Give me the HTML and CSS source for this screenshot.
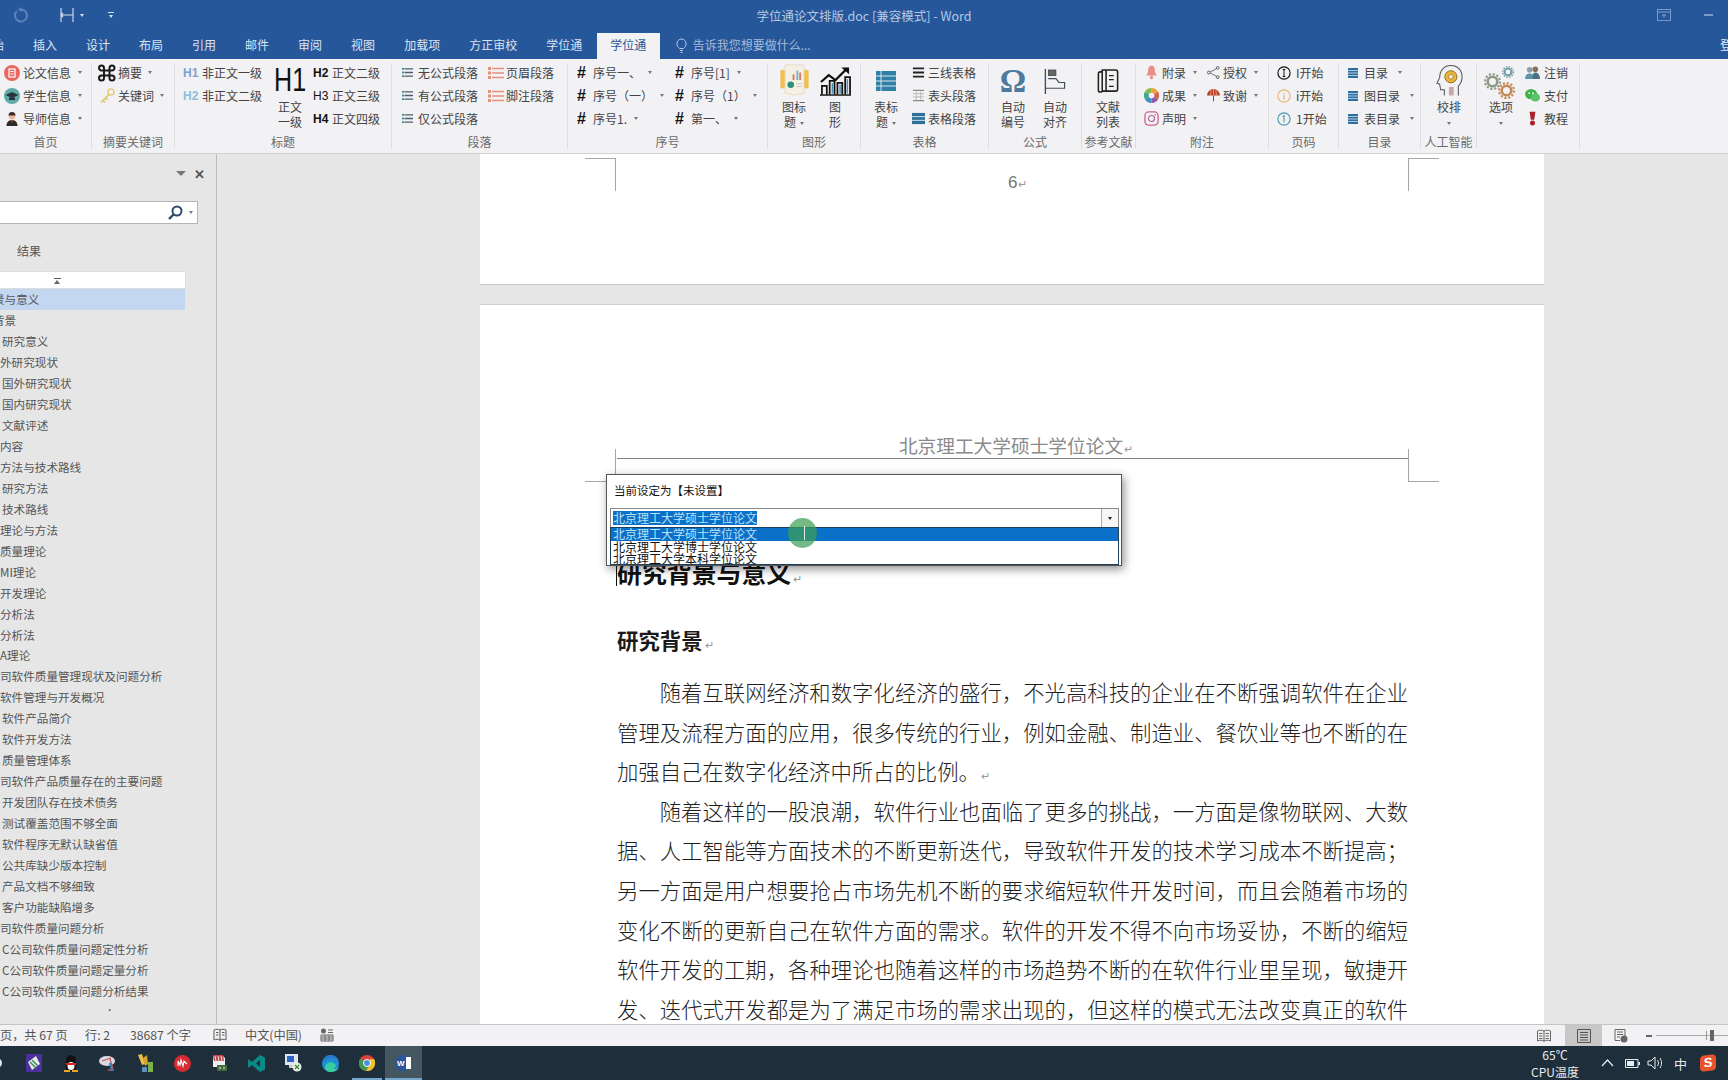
FILE: index.html
```html
<!DOCTYPE html>
<html lang="zh-CN">
<head>
<meta charset="utf-8">
<title>学位通论文排版.doc [兼容模式] - Word</title>
<link rel="stylesheet" href="styles.css">
</head>
<body>
<svg class="defs" aria-hidden="true">
  <symbol id="i-thesis" viewBox="0 0 16 16"><circle cx="8" cy="8" r="8" fill="#e9675f"/><rect x="5" y="4" width="6" height="8" fill="none" stroke="#fff" stroke-width="1.2"/><path d="M6.5 6.5h3M6.5 9h3" stroke="#fff"/></symbol>
  <symbol id="i-student" viewBox="0 0 16 16"><circle cx="8" cy="8" r="8" fill="#5fa9a6"/><path d="M1.5 7L8 4l6.5 3L8 10z" fill="#27323a"/><path d="M5 9.5v2.5h6V9.500z" fill="#27323a"/></symbol>
  <symbol id="i-teacher" viewBox="0 0 16 16"><circle cx="8" cy="5" r="3.400" fill="#e9b59b"/><path d="M4.500 4.500a3.500 3.500 0 0 1 7 0z" fill="#3a2a28"/><path d="M2.500 15c0-4 2.500-6 5.500-6s5.500 2 5.500 6z" fill="#2e2a2c"/><path d="M7 9h2l-1 3z" fill="#d6423c"/></symbol>
  <symbol id="i-knot" viewBox="0 0 18 18"><path d="M6 6V4a2.500 2.500 0 1 0-2.500 2.500H14A2.500 2.500 0 1 0 11.500 4v10a2.500 2.500 0 1 0 2.500-2.500H3.500A2.500 2.500 0 1 0 6 14z" fill="none" stroke="#1a1a1a" stroke-width="2"/></symbol>
  <symbol id="i-key" viewBox="0 0 18 18"><circle cx="13" cy="5" r="3" fill="none" stroke="#e6cf7c" stroke-width="1.600"/><path d="M11 7.500L3 15.500M5 13.500l2 2M7.500 11l2 2" stroke="#e0c66b" stroke-width="1.600"/></symbol>
  <symbol id="i-lines" viewBox="0 0 12 12"><rect x="0" y="1" width="2.500" height="2" fill="#3c8d96"/><rect x="0" y="5" width="2.500" height="2" fill="#3c8d96"/><rect x="0" y="9" width="2.500" height="2" fill="#3c8d96"/><path d="M3 2h9M3 6h9M3 10h9" stroke="#4a5d6a" stroke-width="1.500"/></symbol>
  <symbol id="i-redlines" viewBox="0 0 16 12"><rect x="0" y="0" width="3" height="3" fill="#e58f7e"/><rect x="0" y="4.500" width="3" height="3" fill="#e58f7e"/><rect x="0" y="9" width="3" height="3" fill="#e58f7e"/><path d="M4 1.500h12M4 6h12M4 10.500h12" stroke="#e58f7e" stroke-width="1.500"/></symbol>
  <symbol id="i-report" viewBox="0 0 32 34"><rect x="1" y="6" width="5" height="20" rx="2" fill="#f1c04c"/><rect x="26" y="6" width="5" height="20" rx="2" fill="#f1c04c"/><path d="M6 1h20v30l-10 2-10-2z" fill="#f4f1e4" stroke="#e3dcc0"/><rect x="14" y="11" width="2" height="6" fill="#d9796f"/><rect x="18" y="7" width="2" height="10" fill="#7fb0c6"/><rect x="21" y="9" width="2" height="8" fill="#d9796f"/><circle cx="12" cy="22" r="3.500" fill="#2f8f7a"/><path d="M18 21h6M18 24h6" stroke="#c8c8c8"/></symbol>
  <symbol id="i-chart" viewBox="0 0 32 32"><path d="M1 18l8-7 7 5L28 4" fill="none" stroke="#111" stroke-width="2.200"/><path d="M22 3h8v7z" fill="#111"/><path d="M2 31V22h5v9M10 31V17h5v14M18 31V19h5v12M26 31V13h5v18" fill="none" stroke="#111" stroke-width="1.800"/><path d="M12 30V19h1.500v11zM20 30V21h1.500v9zM27.500 30V15H29v15z" fill="#4d8fb5"/><path d="M0 31.500h32" stroke="#111" stroke-width="1.500"/></symbol>
  <symbol id="i-table" viewBox="0 0 20 20"><rect width="20" height="20" fill="#2f7fa6"/><path d="M0 5h20M0 10h20M0 15h20M5 0v20" stroke="#dfe9ef" stroke-width="1"/></symbol>
  <symbol id="i-three" viewBox="0 0 14 12"><path d="M1 1.500h12M1 6h12M1 10.500h12" stroke="#222" stroke-width="2"/></symbol>
  <symbol id="i-thead" viewBox="0 0 14 14"><path d="M1 1.500h12M1 12.500h12" stroke="#8a8a8a" stroke-width="1.400"/><path d="M1 5h12M1 8.500h12M4.500 3v9M9.500 3v9" stroke="#b5b5b5"/></symbol>
  <symbol id="i-tlines" viewBox="0 0 14 12"><rect width="14" height="12" fill="#2e7099"/><path d="M0 4h14M0 8h14" stroke="#dfe9ef"/></symbol>
  <symbol id="i-align" viewBox="0 0 22 26"><path d="M1 0v26" stroke="#3e4e5c" stroke-width="1.400"/><rect x="4" y="1" width="8" height="6" fill="#666" stroke="#333" stroke-width=".6"/><path d="M4 10h8l3 4h6v6H1" fill="none" stroke="#3e4e5c" stroke-width="1.200"/></symbol>
  <symbol id="i-book" viewBox="0 0 22 26"><path d="M5 1h14a2 2 0 0 1 2 2v18a2 2 0 0 1-2 2H5z" fill="none" stroke="#222" stroke-width="1.600"/><path d="M5 3H3a2 2 0 0 0-2 2v17a2 2 0 0 0 2 2h2M9 1v22" fill="none" stroke="#222" stroke-width="1.600"/><path d="M12 7h5M12 11h5M12 18h5" stroke="#222" stroke-width="1.300"/></symbol>
  <symbol id="i-bell" viewBox="0 0 16 18"><path d="M8 1c3 0 4 2.500 4 5 0 3 1 5 2.500 6.500h-13C3 11 4 9 4 6c0-2.500 1-5 4-5z" fill="#e98f86"/><circle cx="8" cy="15" r="2" fill="#e98f86"/></symbol>
  <symbol id="i-share" viewBox="0 0 14 14"><circle cx="2" cy="7" r="1.500" fill="none" stroke="#555"/><circle cx="11.500" cy="2" r="1.500" fill="none" stroke="#555"/><circle cx="11.500" cy="12" r="1.500" fill="none" stroke="#555"/><path d="M3.500 6.500l6.500-3.500M3.500 7.500l6.500 3.500" stroke="#555" stroke-width=".9"/></symbol>
  <symbol id="i-wheel" viewBox="0 0 16 16"><path d="M8 0a8 8 0 0 1 7 4L8 8z" fill="#e8a33c"/><path d="M15 4a8 8 0 0 1 0 8L8 8z" fill="#d9614f"/><path d="M15 12a8 8 0 0 1-7 4V8z" fill="#8f5aa8"/><path d="M8 16a8 8 0 0 1-7-4l7-4z" fill="#3f8fc4"/><path d="M1 12a8 8 0 0 1 0-8l7 4z" fill="#3fa78a"/><path d="M1 4a8 8 0 0 1 7-4v8z" fill="#87b84a"/><circle cx="8" cy="8" r="3" fill="#f2f1f4"/></symbol>
  <symbol id="i-umbrella" viewBox="0 0 16 16"><path d="M0 8a8 8 0 0 1 16 0z" fill="#b8402c"/><path d="M5 1.500L4.500 8M11 1.500L11.500 8M8 0v8" stroke="#f0b189"/><path d="M8 8v7" stroke="#7b4a2c" stroke-width="1.300"/></symbol>
  <symbol id="i-insta" viewBox="0 0 16 16"><rect x="1" y="1" width="14" height="14" rx="4" fill="none" stroke="#c9668f" stroke-width="1.400"/><circle cx="8" cy="8" r="3.200" fill="none" stroke="#b05f9c" stroke-width="1.200"/><circle cx="12" cy="4" r=".9" fill="#c97a5c"/></symbol>
  <symbol id="i-c1" viewBox="0 0 16 16"><circle cx="8" cy="8" r="7" fill="none" stroke="#111" stroke-width="1.300"/><path d="M8 4v8M6.500 4h3M6.500 12h3" stroke="#111" stroke-width="1.100"/></symbol>
  <symbol id="i-c2" viewBox="0 0 16 16"><circle cx="8" cy="8" r="7" fill="none" stroke="#e6b878" stroke-width="1.300"/><path d="M8 4.500v1.500M8 7v5" stroke="#e0a862" stroke-width="1.200"/></symbol>
  <symbol id="i-c3" viewBox="0 0 16 16"><circle cx="8" cy="8" r="7" fill="none" stroke="#4a98ad" stroke-width="1.300"/><path d="M6.500 5.500L8 4v8" fill="none" stroke="#4a98ad" stroke-width="1.200"/></symbol>
  <symbol id="i-toc" viewBox="0 0 10 10"><rect width="10" height="10" fill="#2e6fa1"/><path d="M0 2.500h10M0 5h10M0 7.500h10" stroke="#e6eef4" stroke-width=".7"/></symbol>
  <symbol id="i-head" viewBox="0 0 30 34"><path d="M10 33v-6H6l-1-6-3-1 3-6C5 6 10 1 17 1c7 0 12 5 12 12 0 5-2 8-4 10v10" fill="none" stroke="#555" stroke-width="1.100"/><circle cx="17" cy="13" r="6.500" fill="#e8b53a" stroke="#8c6a1e"/><circle cx="17" cy="13" r="2.500" fill="#f4f1e4" stroke="#8c6a1e" stroke-width=".7"/><rect x="15" y="24" width="5" height="9" fill="#c9a7a7"/></symbol>
  <symbol id="i-gear" viewBox="0 0 16 16"><circle cx="8" cy="8" r="4.500" fill="none" stroke="currentColor" stroke-width="2.400"/><circle cx="8" cy="8" r="7" fill="none" stroke="currentColor" stroke-width="2" stroke-dasharray="2 1.660"/></symbol>
  <symbol id="i-users" viewBox="0 0 16 16"><circle cx="5" cy="5" r="3" fill="#8f9faa"/><circle cx="11" cy="4.500" r="3" fill="#8a6e5a"/><path d="M0 15c0-4 2-6 5-6s5 2 5 6z" fill="#5a95ac"/><path d="M8 13c0-3 1-5 3-5s5 2 5 7H8z" fill="#49737f"/></symbol>
  <symbol id="i-wechat" viewBox="0 0 16 16"><ellipse cx="6.500" cy="6.500" rx="6.500" ry="5.500" fill="#3fb24c"/><ellipse cx="11" cy="10" rx="5" ry="4.500" fill="#5cc168"/><circle cx="4.500" cy="5.500" r=".9" fill="#fff"/><circle cx="8.500" cy="5.500" r=".9" fill="#fff"/></symbol>
  <symbol id="i-alert" viewBox="0 0 10 18"><path d="M1.500 1h7L7 10.500H3z" fill="#a8222a"/><circle cx="5" cy="14.500" r="3" fill="#a8222a"/></symbol>
  <symbol id="i-spellbook" viewBox="0 0 14 14"><path d="M7 2C5 1 3 1 1 2v10c2-1 4-1 6 0 2-1 4-1 6 0V2c-2-1-4-1-6 0zM7 2v11M3 4.500h2.500M3 7h2.500M9 4.500h2.500M9 7h2.500" fill="none" stroke="#5a5a5a"/></symbol>
</svg>

<div class="app">
  <header class="titlebar">
    <div class="qat">
      <svg class="q-undo" width="16" height="16" viewBox="0 0 16 16"><path d="M4 4a6 6 0 1 0 4-1.500" fill="none" stroke="#5c84b8" stroke-width="2"/><path d="M8.500 0v5L5 2.500z" fill="#5c84b8"/></svg>
      <svg class="q-custom" width="16" height="14" viewBox="0 0 16 14"><path d="M2 0v14M14 0v14M2 7h12M2 7l2-2M2 7l2 2" fill="none" stroke="#d5e0ee" stroke-width="1.100"/></svg>
      <i class="caret light q-caret"></i>
      <span class="q-more"><b></b><i class="caret light"></i></span>
    </div>
    <div class="doc-title">学位通论文排版.doc [兼容模式] - Word</div>
    <div class="wincontrols">
      <svg width="14" height="12" viewBox="0 0 14 12"><rect x=".5" y=".5" width="13" height="11" fill="none" stroke="#7a9ac6"/><path d="M.5 3h13M7 5v4M5 7l2-2 2 2" fill="none" stroke="#7a9ac6"/></svg>
      <b class="minimize"></b>
    </div>
  </header>
  <nav class="tabs">
    <span class="tab first">开始</span><span class="tab">插入</span><span class="tab">设计</span><span class="tab">布局</span><span class="tab">引用</span><span class="tab">邮件</span><span class="tab">审阅</span><span class="tab">视图</span><span class="tab">加载项</span><span class="tab">方正审校</span><span class="tab">学位通</span><span class="tab active">学位通</span>
    <span class="tell"><svg width="11" height="15" viewBox="0 0 11 15"><path d="M3.500 10.500C2 9 1 8 1 5.500a4.500 4.500 0 0 1 9 0C10 8 9 9 7.500 10.500zM4 12.500h3M4.500 14.500h2" fill="none" stroke="#b8cbe4"/></svg>告诉我您想要做什么...</span>
    <span class="login">登录</span>
  </nav>

  <section class="ribbon">
    <div class="group g1"><div class="gbody">
      <div class="col">
        <div class="it"><svg class="ic w16"><use href="#i-thesis"/></svg><span>论文信息</span><i class="caret"></i></div>
        <div class="it"><svg class="ic w16"><use href="#i-student"/></svg><span>学生信息</span><i class="caret"></i></div>
        <div class="it"><svg class="ic w16"><use href="#i-teacher"/></svg><span>导师信息</span><i class="caret"></i></div>
      </div></div><div class="glabel">首页</div></div>

    <div class="group g2"><div class="gbody">
      <div class="col">
        <div class="it"><svg class="ic w18"><use href="#i-knot"/></svg><span>摘要</span><i class="caret"></i></div>
        <div class="it"><svg class="ic w18"><use href="#i-key"/></svg><span>关键词</span><i class="caret"></i></div>
      </div></div><div class="glabel">摘要关键词</div></div>

    <div class="group g3"><div class="gbody">
      <div class="col cA3">
        <div class="it"><b class="hmark soft">H1</b><span>非正文一级</span></div>
        <div class="it"><b class="hmark soft2">H2</b><span>非正文二级</span></div>
      </div>
      <div class="big h1big"><span class="h1text">H1</span><span>正文</span><span>一级</span></div>
      <div class="col cC3">
        <div class="it"><b class="hmark">H2</b><span>正文二级</span></div>
        <div class="it"><b class="hmark thin">H3</b><span>正文三级</span></div>
        <div class="it"><b class="hmark">H4</b><span>正文四级</span></div>
      </div></div><div class="glabel">标题</div></div>

    <div class="group g4"><div class="gbody">
      <div class="col cA4">
        <div class="it"><svg class="ic w11"><use href="#i-lines"/></svg><span>无公式段落</span></div>
        <div class="it"><svg class="ic w11"><use href="#i-lines"/></svg><span>有公式段落</span></div>
        <div class="it"><svg class="ic w11"><use href="#i-lines"/></svg><span>仅公式段落</span></div>
      </div>
      <div class="col">
        <div class="it tight"><svg class="ic w16"><use href="#i-redlines"/></svg><span>页眉段落</span></div>
        <div class="it tight"><svg class="ic w16"><use href="#i-redlines"/></svg><span>脚注段落</span></div>
      </div></div><div class="glabel">段落</div></div>

    <div class="group g5"><div class="gbody">
      <div class="col cA5">
        <div class="it"><b class="hash">#</b><span>序号一、</span><i class="caret"></i></div>
        <div class="it"><b class="hash">#</b><span>序号（一）</span><i class="caret"></i></div>
        <div class="it"><b class="hash">#</b><span>序号1.</span><i class="caret"></i></div>
      </div>
      <div class="col">
        <div class="it"><b class="hash">#</b><span>序号[1]</span><i class="caret"></i></div>
        <div class="it"><b class="hash">#</b><span>序号（1）</span><i class="caret"></i></div>
        <div class="it"><b class="hash">#</b><span>第一、</span><i class="caret"></i></div>
      </div></div><div class="glabel">序号</div></div>

    <div class="group g6"><div class="gbody">
      <div class="big"><svg class="bigic w30"><use href="#i-report"/></svg><span>图标</span><span>题<i class="caret"></i></span></div>
      <div class="big"><svg class="bigic w30"><use href="#i-chart"/></svg><span>图</span><span>形</span></div>
    </div><div class="glabel">图形</div></div>

    <div class="group g7"><div class="gbody">
      <div class="big"><svg class="bigic w20"><use href="#i-table"/></svg><span>表标</span><span>题<i class="caret"></i></span></div>
      <div class="col">
        <div class="it"><svg class="ic w13"><use href="#i-three"/></svg><span>三线表格</span></div>
        <div class="it"><svg class="ic w13"><use href="#i-thead"/></svg><span>表头段落</span></div>
        <div class="it"><svg class="ic w13"><use href="#i-tlines"/></svg><span>表格段落</span></div>
      </div></div><div class="glabel">表格</div></div>

    <div class="group g8"><div class="gbody">
      <div class="big"><span class="omega">Ω</span><span>自动</span><span>编号</span></div>
      <div class="big"><svg class="bigic w22"><use href="#i-align"/></svg><span>自动</span><span>对齐</span></div>
    </div><div class="glabel">公式</div></div>

    <div class="group g9"><div class="gbody">
      <div class="big"><svg class="bigic w22"><use href="#i-book"/></svg><span>文献</span><span>列表</span></div>
    </div><div class="glabel">参考文献</div></div>

    <div class="group g10"><div class="gbody">
      <div class="col cA10">
        <div class="it"><svg class="ic w15"><use href="#i-bell"/></svg><span>附录</span><i class="caret"></i></div>
        <div class="it"><svg class="ic w15"><use href="#i-wheel"/></svg><span>成果</span><i class="caret"></i></div>
        <div class="it"><svg class="ic w15"><use href="#i-insta"/></svg><span>声明</span><i class="caret"></i></div>
      </div>
      <div class="col">
        <div class="it"><svg class="ic w13"><use href="#i-share"/></svg><span>授权</span><i class="caret"></i></div>
        <div class="it"><svg class="ic w13"><use href="#i-umbrella"/></svg><span>致谢</span><i class="caret"></i></div>
      </div></div><div class="glabel">附注</div></div>

    <div class="group g11"><div class="gbody">
      <div class="col">
        <div class="it wide"><svg class="ic w14"><use href="#i-c1"/></svg><span>I开始</span></div>
        <div class="it wide"><svg class="ic w14"><use href="#i-c2"/></svg><span>i开始</span></div>
        <div class="it wide"><svg class="ic w14"><use href="#i-c3"/></svg><span>1开始</span></div>
      </div></div><div class="glabel">页码</div></div>

    <div class="group g12"><div class="gbody">
      <div class="col">
        <div class="it wide"><svg class="ic w10"><use href="#i-toc"/></svg><span>目录</span><i class="caret"></i></div>
        <div class="it wide"><svg class="ic w10"><use href="#i-toc"/></svg><span>图目录</span><i class="caret"></i></div>
        <div class="it wide"><svg class="ic w10"><use href="#i-toc"/></svg><span>表目录</span><i class="caret"></i></div>
      </div></div><div class="glabel">目录</div></div>

    <div class="group g13"><div class="gbody">
      <div class="big"><svg class="bigic w28"><use href="#i-head"/></svg><span>校排</span><span><i class="caret solo"></i></span></div>
    </div><div class="glabel">人工智能</div></div>

    <div class="group g14"><div class="gbody">
      <div class="big"><span class="gears"><svg class="gear a"><use href="#i-gear"/></svg><svg class="gear b"><use href="#i-gear"/></svg><svg class="gear c"><use href="#i-gear"/></svg></span><span>选项</span><span><i class="caret solo"></i></span></div>
      <div class="col">
        <div class="it"><svg class="ic w15"><use href="#i-users"/></svg><span>注销</span></div>
        <div class="it"><svg class="ic w15"><use href="#i-wechat"/></svg><span>支付</span></div>
        <div class="it"><svg class="ic w15 alert"><use href="#i-alert"/></svg><span>教程</span></div>
      </div></div></div>
  </section>

  <main class="main">
    <aside class="nav">
      <div class="nav-top"><i class="nav-arrow"></i><span class="nav-x">✕</span></div>
      <div class="search">
        <svg width="15" height="15" viewBox="0 0 15 15"><circle cx="9" cy="6" r="4.500" fill="none" stroke="#2b4a6b" stroke-width="2"/><path d="M5.500 9.500L1 14" stroke="#2b4a6b" stroke-width="2.400"/></svg>
        <i class="caret"></i>
      </div>
      <div class="nav-tab">结果</div>
      <div class="nav-scroll"><i class="up"></i></div>
      <ul class="outline">
        <li class="cur"><span class="cut">景与意义</span></li>
        <li><span class="cut">背景</span></li>
        <li class="l3">研究意义</li>
        <li>外研究现状</li>
        <li class="l3">国外研究现状</li>
        <li class="l3">国内研究现状</li>
        <li class="l3">文献评述</li>
        <li>内容</li>
        <li>方法与技术路线</li>
        <li class="l3">研究方法</li>
        <li class="l3">技术路线</li>
        <li>理论与方法</li>
        <li>质量理论</li>
        <li>MI理论</li>
        <li>开发理论</li>
        <li>分析法</li>
        <li>分析法</li>
        <li>A理论</li>
        <li>司软件质量管理现状及问题分析</li>
        <li>软件管理与开发概况</li>
        <li class="l3">软件产品简介</li>
        <li class="l3">软件开发方法</li>
        <li class="l3">质量管理体系</li>
        <li>司软件产品质量存在的主要问题</li>
        <li class="l3">开发团队存在技术债务</li>
        <li class="l3">测试覆盖范围不够全面</li>
        <li class="l3">软件程序无默认缺省值</li>
        <li class="l3">公共库缺少版本控制</li>
        <li class="l3">产品文档不够细致</li>
        <li class="l3">客户功能缺陷增多</li>
        <li>司软件质量问题分析</li>
        <li class="l3">C公司软件质量问题定性分析</li>
        <li class="l3">C公司软件质量问题定量分析</li>
        <li class="l3">C公司软件质量问题分析结果</li>
      </ul>
      <div class="nav-dot">.</div>
    </aside>

    <div class="docarea">
      <div class="page page1">
        <i class="crop tl"></i><i class="crop tr"></i>
        <div class="pagenum">6<span class="pm">↵</span></div>
      </div>
      <div class="page page2">
        <i class="crop hl"></i><i class="crop hr"></i>
        <div class="pghead">北京理工大学硕士学位论文<span class="pm">↵</span></div>
        <h1 class="h1"><i class="cursor"></i>研究背景与意义<span class="pm">↵</span></h1>
        <h2 class="h2">研究背景<span class="pm">↵</span></h2>
        <p class="para">随着互联网经济和数字化经济的盛行，不光高科技的企业在不断强调软件在企业管理及流程方面的应用，很多传统的行业，例如金融、制造业、餐饮业等也不断的在加强自己在数字化经济中所占的比例。<span class="pm">↵</span></p>
        <p class="para">随着这样的一股浪潮，软件行业也面临了更多的挑战，一方面是像物联网、大数据、人工智能等方面技术的不断更新迭代，导致软件开发的技术学习成本不断提高；另一方面是用户想要抢占市场先机不断的要求缩短软件开发时间，而且会随着市场的变化不断的更新自己在软件方面的需求。软件的开发不得不向市场妥协，不断的缩短软件开发的工期，各种理论也随着这样的市场趋势不断的在软件行业里呈现，敏捷开发、迭代式开发都是为了满足市场的需求出现的，但这样的模式无法改变真正的软件质量问题，还需要进一步的研究和探索。</p>
      </div>
    </div>
  </main>

  <footer class="status">
    <span class="s1">页，共 67 页</span><span class="s2">行: 2</span><span class="s3">38687 个字</span>
    <svg class="s4" width="14" height="14"><use href="#i-spellbook"/></svg>
    <span class="s5">中文(中国)</span>
    <svg class="s6" width="14" height="14" viewBox="0 0 14 14"><circle cx="3.500" cy="3" r="2.500" fill="#666"/><path d="M1 7h12v6H1zM1 9h12M1 11h12M5 7v6M9 7v6M8 2h5M8 4.500h5" fill="none" stroke="#666"/></svg>
    <span class="views">
      <svg width="14" height="14" viewBox="0 0 14 14"><path d="M7 2C5 1 2 1 .5 2v10c2-1 4.500-1 6.500 0 2-1 4.500-1 6.500 0V2C12 1 9 1 7 2zM7 2v11M2 4.500h3.500M2 7h3.500M2 9.500h3.500M8.500 4.500H12M8.500 7H12M8.500 9.500H12" fill="none" stroke="#666"/></svg>
      <span class="view-on"><svg width="14" height="14" viewBox="0 0 14 14"><path d="M.5.500h13v13H.5zM3 3.500h8M3 6h8M3 8.500h8M3 11h8" fill="none" stroke="#555"/></svg></span>
      <svg width="14" height="14" viewBox="0 0 14 14"><path d="M1 .500h10v7M1 .500v11h5M3 3h6M3 5.500h6M3 8h3" fill="none" stroke="#666"/><circle cx="10" cy="10" r="3.500" fill="#666"/></svg>
    </span>
    <span class="zoom"><b class="z-minus"></b><span class="z-track"><b class="z-tick"></b><b class="z-thumb"></b></span></span>
  </footer>

  <footer class="taskbar">
    <span class="tk first"><b class="tk-white"></b></span>
    <span class="tk"><svg width="16" height="18" viewBox="0 0 16 18"><rect width="16" height="18" fill="#4b2f9c"/><path d="M2 8l8-6 4 8-8 6z" fill="#e9e9e9"/><path d="M4 8l6 6M6 6l6 6" stroke="#3c8d58" stroke-width="1.500"/></svg></span>
    <span class="tk"><svg width="16" height="18" viewBox="0 0 16 18"><ellipse cx="8" cy="7" rx="5" ry="6" fill="#111"/><ellipse cx="8" cy="12" rx="5.500" ry="5" fill="#111"/><ellipse cx="8" cy="12" rx="3.500" ry="4" fill="#fff"/><path d="M3 9h10v2H3z" fill="#d6281f"/><path d="M1 17h6M9 17h6" stroke="#e8a423" stroke-width="2"/></svg></span>
    <span class="tk"><svg width="18" height="18" viewBox="0 0 18 18"><ellipse cx="8" cy="7" rx="8" ry="5" fill="#d9d9e0"/><path d="M3 7l9-3M11 5l3 10M9 16h6" fill="none" stroke="#c2555f" stroke-width="1.300"/><path d="M11 9l2 8" stroke="#3c7fb5" stroke-width="2"/></svg></span>
    <span class="tk"><svg width="17" height="18" viewBox="0 0 17 18"><path d="M1 1l4-1 3 10-3 1z" fill="#e9c146"/><path d="M6 4l4-3 1 9-3 2z" fill="#d9a530"/><rect x="5" y="13" width="5" height="5" fill="#5a8fc2"/><rect x="11" y="13" width="5" height="5" fill="#7cb04a"/><rect x="11" y="8" width="5" height="5" fill="#7cb04a"/></svg></span>
    <span class="tk"><svg width="17" height="17" viewBox="0 0 17 17"><circle cx="8.500" cy="8.500" r="8.500" fill="#d42c32"/><path d="M4 11V6l2 4 1-5 2 6 1-5 3 3" fill="none" stroke="#fff" stroke-width="1.100"/></svg></span>
    <span class="tk"><svg width="16" height="18" viewBox="0 0 16 18"><path d="M2 2h10l2 2v9H2z" fill="#eee"/><path d="M2 1l10 0 1 6H3z" fill="#b9484e"/><path d="M4 2l1 5M7 2l1 5M10 2l1 5" stroke="#eedddd"/><rect x="6" y="11" width="10" height="6" fill="#456a3c"/><path d="M8 14h2M12 14h2" stroke="#fff"/></svg></span>
    <span class="tk"><svg width="17" height="17" viewBox="0 0 17 17"><path d="M12 0l5 2.500v12L12 17 4 10l-3 2.500L0 12V5l1-.500L4 7zM12 5L8 8.500l4 3.500z" fill="#0c8a86"/></svg></span>
    <span class="tk"><svg width="17" height="18" viewBox="0 0 17 18"><rect x="0" y="0" width="13" height="11" fill="#dfe5ef"/><rect x="2" y="2" width="7" height="6" fill="#2a62c0"/><rect x="4" y="11" width="4" height="3" fill="#ccc"/><circle cx="12" cy="13" r="4.500" fill="#e9f1e4"/><path d="M10 11l4 4M14 11l-4 4" stroke="#3b8b3e" stroke-width="1.300"/></svg></span>
    <span class="tk"><svg width="17" height="17" viewBox="0 0 17 17"><circle cx="8.500" cy="8.500" r="8.500" fill="#1e8fd4"/><path d="M3 12c1-5 7-6 10-3 2 2 0 4-2 4 2 2 4 1 6-1-1 3-4 5-8 5-4 0-6-2-6-5z" fill="#38cda0"/><path d="M0 8.500C1 3 6 0 8.500 0c4 0 7 2.500 8 6-1-2-4-3-6-3-4 0-7 2-10.500 5.500z" fill="#2a79c8"/></svg></span>
    <span class="tk tk-run"><svg width="16" height="16" viewBox="0 0 16 16"><circle cx="8" cy="8" r="8" fill="#d9453a"/><path d="M1 4a8 8 0 0 0 6 12l4-7z" fill="#3d9a4c"/><path d="M15 4a8 8 0 0 1-8 12l4-7V4z" fill="#eec12e"/><circle cx="8" cy="8" r="3.500" fill="#4b8fd8" stroke="#fff"/></svg></span>
    <span class="tk tk-active"><span class="word-ic"><span class="word-w">W</span><b class="word-lines"></b></span></span>
    <span class="tray">
      <span class="temp"><span>65℃</span><span>CPU温度</span></span>
      <svg width="13" height="8" viewBox="0 0 13 8"><path d="M1 7l5.500-6L12 7" fill="none" stroke="#e8ecef" stroke-width="1.200"/></svg>
      <svg width="15" height="9" viewBox="0 0 15 9"><path d="M.5.500h12.500v8H.5z" fill="none" stroke="#e8ecef"/><rect x="2" y="2" width="7" height="5" fill="#e8ecef"/><rect x="13.500" y="3" width="1.500" height="3" fill="#e8ecef"/></svg>
      <svg width="16" height="14" viewBox="0 0 16 14"><path d="M1 5h3l4-4v12l-4-4H1zM10.500 4c1.300 2 1.300 4 0 6M13 2c2 3 2 7 0 10" fill="none" stroke="#e8ecef"/></svg>
      <span class="ime">中</span>
      <span class="sogou">S</span>
    </span>
  </footer>

  <div class="dialog">
    <div class="dlg-label">当前设定为【未设置】</div>
    <div class="combo"><span class="combo-sel">北京理工大学硕士学位论文</span><span class="combo-btn"><i class="caret dark"></i></span></div>
    <ul class="dlg-list">
      <li class="sel">北京理工大学硕士学位论文</li>
      <li>北京理工大学博士学位论文</li>
      <li>北京理工大学本科学位论文</li>
    </ul>
  </div>
  <div class="pointer"><i></i></div>
</div>
</body>
</html>
```

FILE: styles.css
```css
* { box-sizing: border-box; }
html, body { margin: 0; padding: 0; }
body { width: 1728px; height: 1080px; overflow: hidden; font-family: "Noto Sans CJK SC", "Liberation Sans", sans-serif; font-size: 12px; color: #444; }
ul { list-style: none; margin: 0; padding: 0; }
.defs { position: absolute; width: 0; height: 0; }
.app { position: relative; width: 1728px; height: 1080px; display: flex; flex-direction: column; overflow: hidden; background: #e6e6e6; }

.caret { display: inline-block; width: 0; height: 0; border: 2.5px solid transparent; border-top: 3px solid #777; border-bottom: 0; margin-left: 4px; vertical-align: middle; flex: none; }
.caret.light { border-top-color: #d5e0ee; }
.caret.dark { border-top-color: #222; margin: 0; }
.caret.solo { margin: 0; }

.titlebar { height: 33px; flex: none; background: #27579b; display: flex; align-items: center; padding-bottom: 3px; position: relative; }
.qat { display: flex; align-items: center; padding-left: 13px; }
.q-custom { margin-left: 30px; }
.q-caret { margin-left: 5px; }
.q-more { margin-left: 24px; display: inline-flex; flex-direction: column; align-items: center; gap: 2px; }
.q-more b { width: 6px; height: 1px; background: #d5e0ee; }
.q-more .caret { margin: 0; }
.doc-title { position: absolute; left: 0; right: 0; top: 7px; text-align: center; color: #b4c8e2; font-size: 12.5px; line-height: 17px; }
.wincontrols { margin-left: auto; display: flex; align-items: center; gap: 33px; padding-right: 15px; }
.minimize { width: 9px; height: 2px; background: #7a9ac6; }

.tabs { height: 26px; flex: none; background: #27579b; display: flex; align-items: stretch; color: #dbe4f1; font-size: 12px; line-height: 24px; position: relative; white-space: nowrap; }
.tab { padding: 0 14.5px; }
.tab.first { margin-left: -34.5px; }
.tab.active { background: #f2f1f4; color: #2b579a; padding: 0 13.5px; height: 26px; }
.tell { display: flex; align-items: center; gap: 6px; margin-left: 16px; color: #a5bcd9; font-size: 12px; height: 24px; }
.login { position: absolute; left: 1720px; top: 0; color: #e7edf5; }

.ribbon { height: 95px; flex: none; background: #f2f1f4; border-bottom: 1px solid #d2d2d2; display: flex; align-items: flex-start; }
.group { height: 85px; margin-top: 4px; border-right: 1px solid #dedde0; display: flex; flex-direction: column; flex: none; }
.gbody { height: 69px; margin-top: -1px; display: flex; flex: none; }
.glabel { height: 22px; line-height: 22px; text-align: center; color: #6a6a6a; white-space: nowrap; }
.col { display: flex; flex-direction: column; flex: none; margin-top: -1px; }
.it { height: 23px; display: flex; align-items: center; gap: 3px; white-space: nowrap; color: #444; }
.it.tight { gap: 2px; }
.it.wide { gap: 5px; }
.ic { flex: none; height: 16px; }
.w10 { width: 10px; height: 10px; } .w11 { width: 11px; height: 11px; margin-right: 2px; } .w13 { width: 13px; height: 13px; } .w14 { width: 14px; height: 14px; } .w15 { width: 15px; height: 15px; } .w16 { width: 16px; height: 16px; } .w18 { width: 18px; height: 18px; }

.g1 { width: 92px; } .g1 .gbody { padding-left: 4px; }
.g2 { width: 83px; } .g2 .gbody { padding-left: 6px; }
.g2 .it { gap: 2px; }
.g3 { width: 217px; } .g3 .gbody { padding-left: 8px; }
.cA3 { width: 90px; }
.h1big { width: 32px; }
.cC3 { margin-left: 6px; }
.hmark { width: 14px; font-family: "Liberation Sans", sans-serif; font-size: 12px; color: #111; margin-right: 2px; flex: none; }
.hmark.thin { font-weight: 400; }
.hmark.soft { color: #7ba3d0; }
.hmark.soft2 { color: #8cc0dc; }
.big { width: 34px; flex: none; display: flex; flex-direction: column; align-items: center; line-height: 15px; white-space: nowrap; }
.h1text { height: 37px; font-family: "Liberation Sans", sans-serif; font-size: 33px; line-height: 36px; color: #111; transform: scaleX(.76); }
.bigic { height: 34px; margin: 1px 0 2px; flex: none; }
.w20 { width: 20px; height: 20px; margin: 9px 0 8px; }
.w22 { width: 22px; height: 25px; margin: 7px 0 5px; }
.w28 { width: 28px; height: 33px; margin: 2px 0 2px; }
.w30 { width: 31px; height: 32px; margin: 2px 0 3px; }
.omega { height: 37px; font-family: "Liberation Serif", serif; font-size: 33px; font-weight: 700; line-height: 38px; color: #4e7a9e; }
.g4 { width: 176px; } .g4 .gbody { padding-left: 10px; }
.cA4 { width: 86px; }
.g5 { width: 200px; } .g5 .gbody { padding-left: 9px; }
.cA5 { width: 98px; }
.hash { width: 11px; margin-right: 2px; font-family: "Liberation Sans", sans-serif; font-size: 16px; color: #111; }
.g6 { width: 93px; } .g6 .gbody { padding-left: 9px; }
.g6 .big + .big { margin-left: 7px; }
.g7 { width: 128px; } .g7 .gbody { padding-left: 8px; }
.g7 .col { margin-left: 9px; }
.g8 { width: 93px; } .g8 .gbody { padding-left: 7px; }
.g8 .big + .big { margin-left: 8px; }
.g9 { width: 54px; } .g9 .gbody { padding-left: 9px; }
.g10 { width: 133px; } .g10 .gbody { padding-left: 8px; }
.cA10 { width: 63px; }
.g11 { width: 70px; } .g11 .gbody { padding-left: 8px; }
.g12 { width: 82px; } .g12 .gbody { padding-left: 9px; }
.g12 .it { gap: 6px; }
.g13 { width: 56px; } .g13 .gbody { padding-left: 11px; }
.g14 { width: 103px; } .g14 .gbody { padding-left: 7px; }
.g14 .col { margin-left: 7px; }
.g14 .it { gap: 4px; }
.gears { position: relative; width: 34px; height: 37px; display: block; }
.gear { position: absolute; }
.gear.a { left: 0; top: 11px; width: 17px; height: 17px; color: #8b9a84; }
.gear.b { left: 18px; top: 4px; width: 12px; height: 12px; color: #6d9aa6; }
.gear.c { left: 14px; top: 20px; width: 17px; height: 17px; color: #c28a54; }

.main { flex: 1; min-height: 0; display: flex; }
.nav { width: 217px; flex: none; background: #e6e6e6; border-right: 1px solid #bdbdbd; position: relative; overflow: hidden; }
.nav-top { height: 33px; display: flex; justify-content: flex-end; align-items: center; padding: 6px 11px 0 0; gap: 8px; color: #666; }
.nav-arrow { border: 5px solid transparent; border-top: 5px solid #777; border-bottom: 0; }
.nav-x { font-size: 13px; font-weight: 700; color: #555; line-height: 14px; }
.search { width: 198px; height: 23px; margin-top: 14px; background: #fff; border: 1px solid #b5b5b5; border-left: 0; display: flex; align-items: center; justify-content: flex-end; padding-right: 4px; }
.search .caret { margin-left: 6px; }
.nav-tab { margin-top: 15px; padding-left: 17px; line-height: 24px; color: #555; font-size: 12px; }
.nav-scroll { height: 18px; width: 186px; margin-top: 8px; background: #fff; border: 1px solid #dcdcdc; border-left: 0; display: flex; justify-content: center; align-items: center; padding-right: 70px; }
.up { width: 7px; height: 5px; border-top: 1px solid #555; position: relative; }
.up::after { content: ""; position: absolute; left: 0; top: 1px; border: 3.5px solid transparent; border-bottom: 4px solid #666; border-top: 0; }
.outline li { height: 20.97px; line-height: 20.97px; white-space: nowrap; font-size: 11.6px; color: #555; width: 185px; overflow: hidden; }
.outline .cur { background: #c3d7f1; }
.outline .l3 { padding-left: 2px; }
.cut { display: block; margin-left: -7px; }
.nav-dot { padding-left: 108px; line-height: 8px; color: #444; }

.docarea { flex: 1; min-width: 0; padding-left: 263px; overflow: hidden; }
.page { position: relative; width: 1064px; background: #fff; }
.page1 { height: 131px; border-bottom: 1px solid #c6c6c6; margin-bottom: 19px; }
.page2 { height: 900px; border-top: 1px solid #d0d0d0; padding: 0 136px 0 137px; font-family: "Noto Sans CJK SC", sans-serif; color: #222; }
.pagenum { padding-top: 19px; padding-left: 528px; font-family: "Liberation Sans", sans-serif; font-size: 17px; line-height: 20px; color: #777; }
.pm { font-size: 11px; line-height: 0; color: #999; font-weight: 400; margin-left: 1px; }
.crop { position: absolute; width: 31px; height: 33px; border: 0 solid #a6a6a6; }
.crop.tl { left: 105px; top: 4px; border-top-width: 1px; border-right-width: 1px; }
.crop.tr { left: 928px; top: 4px; border-top-width: 1px; border-left-width: 1px; }
.crop.hl { left: 105px; top: 144px; height: 33px; border-bottom-width: 1px; border-right-width: 1px; }
.crop.hr { left: 928px; top: 144px; height: 33px; border-bottom-width: 1px; border-left-width: 1px; }
.pghead { margin-top: 128px; height: 26px; padding-left: 7px; line-height: 23px; border-bottom: 1px solid #808080; text-align: center; font-size: 18.7px; color: #8a8a8a; }
.h1 { margin: 93px 0 0; font-size: 24.9px; line-height: 40px; font-weight: 700; color: #111; position: relative; }
.cursor { position: absolute; left: -1px; top: 2px; width: 1px; height: 32px; background: #111; }
.h2 { margin: 32.5px 0 0; font-size: 21.4px; line-height: 30px; font-weight: 700; color: #1a1a1a; }
.h1 .pm, .h2 .pm { margin-left: 2px; }
.para { margin: 0; font-size: 21.35px; line-height: 39.6px; text-indent: 42.7px; text-align: justify; color: #1f1f1f; font-weight: 300; }
.h2 + .para { margin-top: 17.5px; }

.status { height: 22px; flex: none; background: #f2f1f4; border-top: 1px solid #c4c4c4; display: flex; align-items: center; padding-bottom: 2px; position: relative; color: #555; font-size: 12.2px; white-space: nowrap; }
.s1 { margin-left: 0; width: 85px; }
.s2 { width: 45px; }
.s3 { width: 83px; }
.s4 { margin-right: 18px; }
.s5 { width: 75px; }
.views { margin-left: auto; display: flex; align-items: center; height: 21px; margin-bottom: -2px; }
.view-on { width: 37px; height: 21px; margin: 0 12px 0 14px; background: #c8c8c8; display: flex; align-items: center; justify-content: center; }
.zoom { display: flex; align-items: center; margin-left: 18px; width: 82px; margin-bottom: -2px; }
.z-minus { width: 6px; height: 2px; background: #666; margin-right: 4px; flex: none; }
.z-track { position: relative; flex: 1; height: 1px; background: #aaa; }
.z-tick { position: absolute; left: 50px; top: -4px; width: 1px; height: 9px; background: #999; }
.z-thumb { position: absolute; left: 54px; top: -5px; width: 4px; height: 11px; background: #666; }

.taskbar { height: 34px; flex: none; background: #1e2f3b; display: flex; align-items: stretch; position: relative; }
.tk { width: 37px; flex: none; display: flex; align-items: center; justify-content: center; }
.tk.first { margin-left: -21.5px; }
.tk-white { width: 10px; height: 10px; border-radius: 50%; background: #dfe3e6; }
.tk-run { width: 30px; margin: 0 3px 0 3px; box-shadow: inset 0 -2px 0 #74a8cf; }
.tk-active { width: 37px; background: #44565f; box-shadow: inset 0 -2px 0 #74a8cf; }
.word-ic { width: 16px; height: 16px; border-radius: 8px; background: #2b579a; display: flex; align-items: center; gap: 1px; padding-left: 2px; position: relative; }
.word-w { color: #fff; font: 700 8px "Liberation Sans", sans-serif; }
.word-lines { width: 6px; height: 12px; background: #fff; }
.tray { position: absolute; right: 0; top: 0; bottom: 0; display: flex; align-items: center; color: #e8ecef; }
.temp { position: absolute; right: 143px; top: 0; width: 60px; display: flex; flex-direction: column; align-items: center; font-size: 12px; line-height: 17px; }
.tray > svg:nth-of-type(1) { margin-right: 11px; }
.tray > svg:nth-of-type(2) { margin-right: 7px; }
.tray > svg:nth-of-type(3) { margin-right: 11px; }
.ime { font-size: 13px; margin-right: 13px; }
.sogou { width: 16px; height: 16px; margin-right: 12px; background: #e8532c; color: #fff; border-radius: 4px; font: 700 13px/16px "Liberation Sans", sans-serif; text-align: center; transform: skewY(-8deg); }

.dialog { position: absolute; left: 606px; top: 474px; width: 516px; height: 92px; background: #fff; border: 1px solid #555; box-shadow: 2px 3px 9px rgba(0, 0, 0, .45); }
.dlg-label { height: 33px; padding: 6px 0 0 7px; font-size: 11.5px; line-height: 18px; color: #111; }
.combo { margin-left: 3px; width: 509px; height: 20px; border: 1px solid #8a8a8a; display: flex; align-items: center; padding-left: 2px; }
.combo-sel { background: #0a70c8; color: #b8e0f8; font-size: 12px; line-height: 14px; white-space: nowrap; }
.combo-btn { margin-left: auto; width: 17px; height: 18px; border-left: 1px solid #aaa; display: flex; align-items: center; justify-content: center; background: #f6f6f6; }
.dlg-list { position: absolute; left: 3px; top: 52px; width: 509px; height: 38px; border: 1px solid #1c3f5c; background: #fff; overflow: hidden; }
.dlg-list li { height: 12px; line-height: 12px; padding-left: 2px; font-size: 12px; color: #111; white-space: nowrap; }
.dlg-list .sel { height: 13px; background: #0a70c8; color: #b8e0f8; }
.pointer { position: absolute; left: 788px; top: 518px; width: 29px; height: 30px; border-radius: 50%; background: rgba(62, 160, 84, .72); display: flex; align-items: center; justify-content: center; }
.pointer i { width: 1px; height: 14px; margin-left: 4px; background: #e8e8e8; }
```
